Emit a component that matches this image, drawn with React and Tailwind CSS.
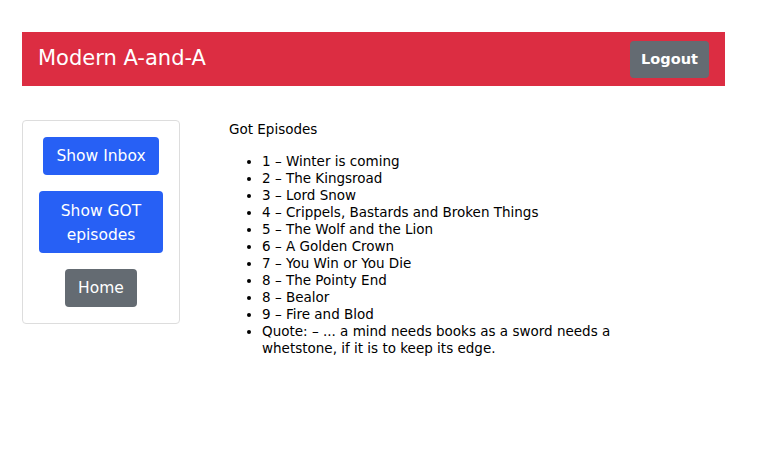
export default function App() {
  const eps = [
    "1 – Winter is coming",
    "2 – The Kingsroad",
    "3 – Lord Snow",
    "4 – Crippels, Bastards and Broken Things",
    "5 – The Wolf and the Lion",
    "6 – A Golden Crown",
    "7 – You Win or You Die",
    "8 – The Pointy End",
    "8 – Bealor",
    "9 – Fire and Blod",
    "Quote: – ... a mind needs books as a sword needs a whetstone, if it is to keep its edge.",
  ];
  return (
    <div className="min-h-[456px] bg-white pt-[32px] pl-[22px] text-black" style={{ fontFamily: '"DejaVu Sans", sans-serif' }}>
      <div className="flex h-[54px] w-[703px] items-center justify-between bg-[#dc2d42] pl-[16px] pr-[16px]">
        <span className="text-[21px] text-white">Modern A-and-A</span>
        <button className="h-[37px] w-[79px] rounded-[4px] bg-[#646b72] pt-[1px] text-[14.5px] font-bold text-white">Logout</button>
      </div>
      <div className="mt-[34px] flex gap-[49px]">
        <div className="flex h-[204px] w-[158px] flex-col items-center rounded-[4px] border border-[#dddddd] pt-[16px]">
          <button className="h-[38px] w-[116px] rounded-[4px] bg-[#2760f5] pt-[2px] text-[15.5px] text-white">Show Inbox</button>
          <button className="mt-[16px] h-[62px] w-[124px] rounded-[4px] bg-[#2760f5] pt-[1px] text-[15.5px] leading-[24px] text-white">Show GOT<br />episodes</button>
          <button className="mt-[16px] h-[38px] w-[72px] rounded-[4px] bg-[#646b72] pt-[2px] text-[15.5px] text-white">Home</button>
        </div>
        <div className="pt-[1px] text-[13.5px] leading-[17px]">
          <div>Got Episodes</div>
          <ul className="mt-[15px] w-[390px] list-disc pl-[33px]">
            {eps.map((e, i) => (
              <li key={i}>{e}</li>
            ))}
          </ul>
        </div>
      </div>
    </div>
  );
}
